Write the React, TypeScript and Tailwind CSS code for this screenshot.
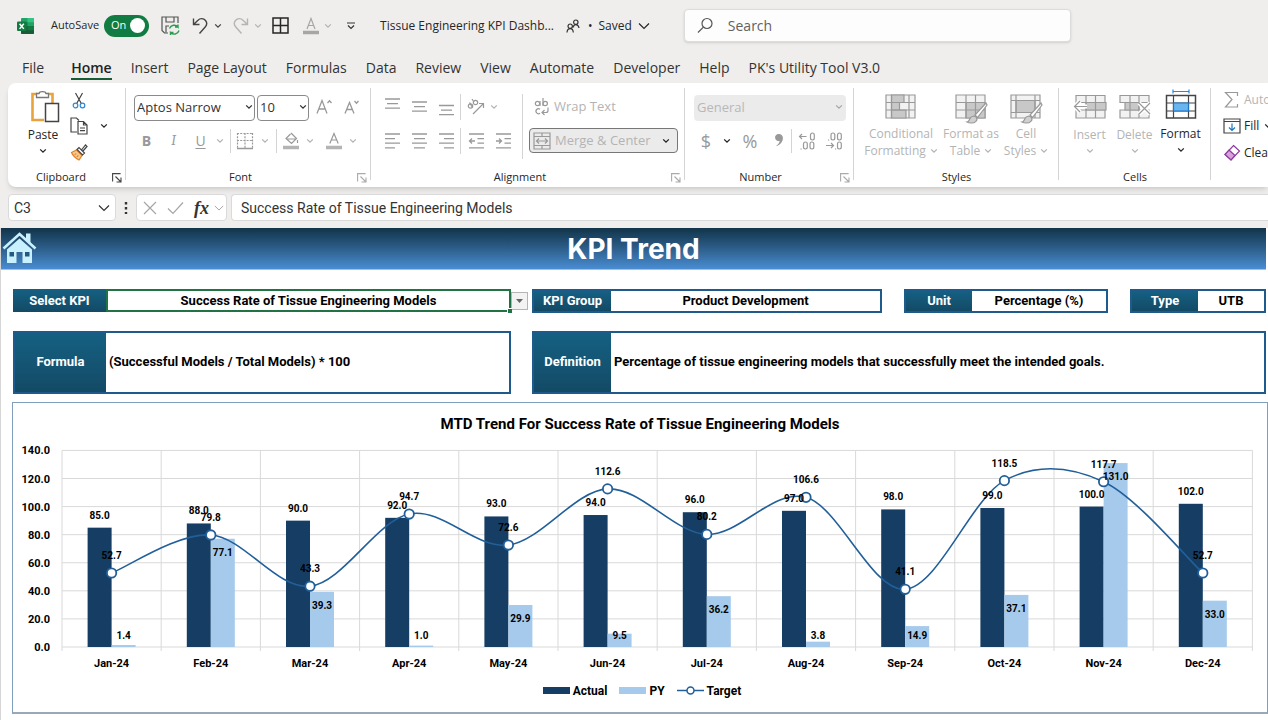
import type { ReactNode } from 'react'

const months = ['Jan', 'Feb', 'Mar', 'Apr', 'May', 'Jun', 'Jul', 'Aug', 'Sep', 'Oct', 'Nov', 'Dec']
const actual = [85, 88, 90, 92, 93, 94, 96, 97, 98, 99, 100, 102]
const previous = [1.4, 77.1, 39.3, 1.0, 29.9, 9.5, 36.2, 3.8, 14.9, 37.1, 131, 33]
const target = [52.7, 79.8, 43.3, 94.7, 72.6, 112.6, 80.2, 106.6, 41.1, 118.5, 117.7, 52.7]

const tabs = [
  'Home',
  'Insert',
  'Page Layout',
  'Formulas',
  'Data',
  'Review',
  'View',
  'Automate',
  'Developer',
  'Help',
  "PK's Utility Tool V3.0",
]

/* ---------- small building blocks ---------- */

function Icon({ w = 18, h = 18, className = '', children }: { w?: number; h?: number; className?: string; children: ReactNode }) {
  return (
    <svg
      width={w}
      height={h}
      viewBox={`0 0 ${w} ${h}`}
      fill="none"
      stroke="currentColor"
      strokeWidth="1.2"
      className={`shrink-0 ${className}`}
      aria-hidden="true"
    >
      {children}
    </svg>
  )
}

function Chevron({ className = '' }: { className?: string }) {
  return (
    <Icon w={8} h={6} className={className}>
      <path d="M1.2 1.4 4 4.2l2.8-2.8" strokeWidth="1.3" />
    </Icon>
  )
}

function WideChevron({ className = '' }: { className?: string }) {
  return (
    <Icon w={12} h={8} className={className}>
      <path d="M1 1.5 6 6.5l5-5" />
    </Icon>
  )
}

function Tool({ label, className = '', children }: { label: string; className?: string; children: ReactNode }) {
  return (
    <button type="button" aria-label={label} className={`flex h-6 shrink-0 items-center justify-center ${className}`}>
      {children}
    </button>
  )
}

function Divider({ className = 'h-6' }: { className?: string }) {
  return <span className={`w-px shrink-0 bg-[#d4d4d4] ${className}`} />
}

function Group({ name, launcher, className, children }: { name: string; launcher?: string; className: string; children: ReactNode }) {
  return (
    <section className={`relative flex shrink-0 flex-col ${className}`}>
      <div className="h-[86px] pt-[11px]">{children}</div>
      <h2 className="text-center text-[11px] leading-4 text-[#262626]">{name}</h2>
      {launcher && (
        <button type="button" aria-label={`${name} settings`} className={`absolute right-1 bottom-[2px] ${launcher}`}>
          <Icon w={10} h={10}>
            <path d="M.6 8.500V.6h8M3.500 3.500l5 5M9 4.500V9H4.500" strokeWidth="1.100" />
          </Icon>
        </button>
      )}
      <span className="absolute top-[5px] right-0 bottom-[5px] w-px bg-[#d4d4d4]" />
    </section>
  )
}

function Lines({ rows, y = 1 }: { rows: [number, number][]; y?: number }) {
  return (
    <Icon w={16} h={18}>
      {rows.map(([x1, x2], i) => (
        <path key={i} d={`M${x1} ${y + i * 4.6}H${x2}`} strokeWidth="1.3" />
      ))}
    </Icon>
  )
}

/* ---------- title bar ---------- */

function TitleBar() {
  return (
    <header className="flex h-[50px] items-center pt-px pl-4 text-xs text-[#262626]">
      <svg width="18" height="18" viewBox="0 0 18 18" className="shrink-0" aria-hidden="true">
        <rect x="5" y="1" width="13" height="16" rx="1" fill="#21a366" />
        <path d="M11.500 1H17a1 1 0 0 1 1 1v3.200h-6.500z" fill="#33c481" />
        <path d="M5 5.200h6.500v4H5z" fill="#107c41" />
        <path d="M5 9.200h13V16a1 1 0 0 1-1 1H6a1 1 0 0 1-1-1z" fill="#185c37" />
        <path d="M11.500 9.200H18v4h-6.500z" fill="#107c41" />
        <rect x="1" y="4.500" width="9.500" height="9.500" rx="1" fill="#107c41" />
        <path d="m3.600 6.700 4.200 5.200m0-5.200-4.200 5.200" stroke="#fff" strokeWidth="1.500" />
      </svg>
      <span className="ml-[17px] text-[11px]" id="autosave">AutoSave</span>
      <button
        type="button"
        role="switch"
        aria-checked="true"
        aria-labelledby="autosave"
        className="ml-[5px] flex h-[22px] w-[45px] shrink-0 items-center justify-between rounded-full bg-[#107c41] pr-1 pl-[7px] text-[11px] text-white"
      >
        On
        <span className="size-[15px] rounded-full bg-white" />
      </button>
      <Tool label="Save" className="ml-3">
        <Icon w={19} h={20} className="text-[#555]">
          <path d="M7 17H3.500L1 14.500V1h16v6" />
          <path d="M5 1v5h8V1M5 16.500V10h3" />
          <path d="M8.500 12.500a5 5 0 0 1 8.500-1.500V8.500M17 11h-3M18 14.500a5 5 0 0 1-8.500 2V19M9.500 16.500h3" stroke="#2a9d52" strokeWidth="1.400" />
        </Icon>
      </Tool>
      <Tool label="Undo" className="ml-3">
        <Icon w={17} h={18} className="text-[#444]">
          <path d="M1.500 1.500v6h6M1.800 7.200 6 3.200a5 5 0 0 1 7.500.3c1.600 2 1.500 4.500-.3 6.500L7.500 16.500" strokeWidth="1.400" />
        </Icon>
      </Tool>
      <Chevron className="ml-[5px] text-[#444]" />
      <Tool label="Redo" className="ml-[10px]">
        <Icon w={17} h={18} className="text-[#b4b4b4]">
          <path d="M15.500 1.500v6h-6M15.200 7.200 11 3.200a5 5 0 0 0-7.500.3c-1.600 2-1.500 4.500.3 6.500l5.700 6.500" strokeWidth="1.400" />
        </Icon>
      </Tool>
      <Chevron className="ml-[5px] text-[#b4b4b4]" />
      <Tool label="Borders" className="ml-[10px]">
        <Icon w={17} h={17} className="text-[#262626]">
          <path d="M1 1h15v15H1zM8.500 1v15M1 8.500h15" strokeWidth="1.500" />
        </Icon>
      </Tool>
      <Tool label="Font color" className="ml-[13px]">
        <Icon w={18} h={18} className="text-[#a6a6a6]">
          <path d="m5 12 4-10.500L13 12M6.300 8.500h5.400" />
          <path d="M1 15.500h16" strokeWidth="3.500" />
        </Icon>
      </Tool>
      <Chevron className="ml-1 text-[#b4b4b4]" />
      <Tool label="Customize toolbar" className="ml-[14px]">
        <Icon w={10} h={8} className="text-[#333]">
          <path d="M1 1h8M2 3.500l3 3 3-3" />
        </Icon>
      </Tool>
      <h1 className="ml-6 whitespace-nowrap">Tissue Engineering KPI Dashb...</h1>
      <Icon w={14} h={14} className="ml-3 text-[#333]">
        <circle cx="9.800" cy="3.200" r="2.200" />
        <path d="M7.200 8.500c.4-2 1.400-2.800 2.600-2.800s2.800.8 3.200 3.300" />
        <circle cx="4.200" cy="7.200" r="2.200" />
        <path d="M1 13.500c.2-2.500 1.600-3.800 3.200-3.800s2.900 1.300 3.100 3.800" />
      </Icon>
      <button type="button" className="ml-2 flex items-center gap-[6px] whitespace-nowrap">
        <span>•</span>
        <span>Saved</span>
        <WideChevron />
      </button>
      <label className="ml-[34px] flex h-[33px] w-[387px] items-center gap-[14px] rounded border border-[#dcdcdc] bg-[#fdfdfd] px-3 shadow-sm">
        <Icon w={17} h={17} className="text-[#555]">
          <circle cx="10" cy="6.500" r="5" />
          <path d="M6.400 10.100 1 15.500" />
        </Icon>
        <input type="search" aria-label="Search" placeholder="Search" className="min-w-0 flex-1 text-sm outline-none placeholder:text-[#616161]" />
      </label>
    </header>
  )
}

function Tabs() {
  return (
    <nav className="flex h-[33px] items-start gap-[19px] overflow-hidden pt-2 pl-[22px] text-sm leading-5 whitespace-nowrap text-[#333]">
      <a href="#file" className="mr-2">File</a>
      {tabs.map((tab) => (
        <a
          key={tab}
          href={`#${tab}`}
          className={tab === 'Home' ? 'border-b-2 border-[#185c37] font-semibold text-[#222]' : ''}
        >
          {tab}
        </a>
      ))}
    </nav>
  )
}

/* ---------- ribbon ---------- */

function Clipboard() {
  return (
    <Group name="Clipboard" launcher="text-[#444]" className="w-[118px] pr-3">
      <div className="-mt-1 flex pl-[17px] text-[#262626]">
        <button type="button" className="flex w-9 flex-col items-center text-xs leading-4">
          <svg width="30" height="33" viewBox="0 0 30 33" fill="none" className="ml-1" aria-hidden="true">
            <path d="M7 4H2.500v26H14M18 4h4.500v9" stroke="#e8a33d" strokeWidth="2.600" />
            <path d="M6.500 7.500v-4H9C9.500 1 15.500 1 16 3.500h2.500v4z" fill="#fff" stroke="#777" strokeWidth="1.300" />
            <path d="M15.500 13.500h13v18h-13z" fill="#fff" stroke="#444" strokeWidth="1.500" />
          </svg>
          <span className="mt-1">Paste</span>
          <Chevron className="mt-[5px]" />
        </button>
        <div className="ml-[9px] flex flex-col gap-[3px]">
          <Tool label="Cut" className="h-[22px] w-[18px]">
            <Icon w={14} h={18} className="text-[#444]">
              <path d="m3.500 1 5.800 10.500M10.500 1 4.700 11.500" />
              <circle cx="3.500" cy="13.500" r="2.300" stroke="#2b88d8" />
              <circle cx="10.500" cy="13.500" r="2.300" stroke="#2b88d8" />
            </Icon>
          </Tool>
          <Tool label="Copy" className="h-[22px] w-[18px]">
            <Icon w={18} h={18} className="text-[#444]">
              <path d="M7 15H1V1h5.500L9 3.500" />
              <path d="M8 4.500h5.500L17 8v9H8zM13.500 4.500V8H17M10 11h5M10 13.700h5" />
            </Icon>
          </Tool>
          <Tool label="Format painter" className="w-[18px]">
            <Icon w={18} h={18} className="text-[#444]">
              <path d="m1.500 9.500 5-2.500 5.500 5.500-3 4.500C6 15.500 3 13 1.500 9.500z" fill="#f7c98b" stroke="#e0802c" />
              <path d="m4.500 11.500 1.800-.8M6.800 13.800l1.500-1.500" stroke="#e0802c" />
              <path d="m7 6.500 2-2 5.500 5.500-2 2zM11.500 7l4-5 1.500 1.500-4 4.500" fill="#fff" />
            </Icon>
          </Tool>
        </div>
        <Chevron className="mt-[33px] ml-3" />
      </div>
    </Group>
  )
}

function FontGroup() {
  return (
    <Group name="Font" launcher="text-[#aaa]" className="w-[245px] pr-4">
      <div className="flex items-center gap-[2px] pl-2 text-[#333]">
        <div className="relative">
          <select aria-label="Font family" className="h-[26px] w-[121px] appearance-none rounded border border-[#8a8a8a] bg-white pl-[2px] text-[13px]">
            <option>Aptos Narrow</option>
          </select>
          <Chevron className="pointer-events-none absolute top-[10px] right-[2px]" />
        </div>
        <div className="relative">
          <select aria-label="Font size" className="h-[26px] w-[52px] appearance-none rounded border border-[#8a8a8a] bg-white pl-[2px] text-[13px]">
            <option>10</option>
          </select>
          <Chevron className="pointer-events-none absolute top-[10px] right-[2px]" />
        </div>
        <Tool label="Increase font size" className="ml-1 w-[18px] text-[#999]">
          <Icon w={17} h={18}>
            <path d="m1 15.500 5-13 5 13M2.800 11h6.400M11.500 5l2-2.200 2 2.200" strokeWidth="1.300" />
          </Icon>
        </Tool>
        <Tool label="Decrease font size" className="ml-2 w-[18px] text-[#999]">
          <Icon w={16} h={18}>
            <path d="m1 15.500 4.500-11 4.500 11M2.700 11.500h5.600M10.500 3l2 2.200 2-2.200" strokeWidth="1.300" />
          </Icon>
        </Tool>
      </div>
      <div className="mt-2 flex items-center pl-[7px] text-sm text-[#999]">
        <Tool label="Bold" className="w-[27px] font-bold">B</Tool>
        <Tool label="Italic" className="w-[27px] font-serif italic">I</Tool>
        <Tool label="Underline" className="w-[27px] underline underline-offset-2">U</Tool>
        <Chevron className="ml-[2px] text-[#b4b4b4]" />
        <Divider className="ml-[6px] h-6" />
        <Tool label="Borders" className="ml-[5px]">
          <Icon w={18} h={18}>
            <path d="M1.500 1v15M16.500 1v15M9 1v15M1 1.500h16M1 8.500h16" strokeDasharray="2 1.200" />
            <path d="M1 16.500h16" strokeWidth="1.600" />
          </Icon>
        </Tool>
        <Chevron className="ml-[7px] text-[#b4b4b4]" />
        <Divider className="ml-[7px] h-6" />
        <Tool label="Fill color" className="ml-[5px]">
          <Icon w={18} h={18}>
            <path d="m9 1 5.500 5.500-5 5L4 6.500 8.500 2M4.500 7h9.500M15.500 8v3" />
            <path d="M1 15.500h16" strokeWidth="3.500" stroke="#b4b4b4" />
          </Icon>
        </Tool>
        <Chevron className="ml-[6px] text-[#b4b4b4]" />
        <Tool label="Font color" className="ml-[11px]">
          <Icon w={18} h={18}>
            <path d="M4.800 11.500 9 1.500l4.200 10M6.200 8h5.600" />
            <path d="M1 15.500h16" strokeWidth="3.500" stroke="#b4b4b4" />
          </Icon>
        </Tool>
        <Chevron className="ml-[6px] text-[#b4b4b4]" />
      </div>
    </Group>
  )
}

function Alignment() {
  return (
    <Group name="Alignment" launcher="text-[#aaa]" className="w-[314px] pr-4">
      <div className="flex text-[#999]">
        <div>
          <div className="flex h-[26px] items-center pl-[7px]">
            <Tool label="Top align" className="w-[27px]"><Lines rows={[[1, 16], [3, 14], [1, 16]]} /></Tool>
            <Tool label="Middle align" className="w-[27px]"><Lines y={4} rows={[[1, 16], [3, 14], [1, 16]]} /></Tool>
            <Tool label="Bottom align" className="w-[27px]"><Lines y={7.5} rows={[[1, 16], [3, 14], [1, 16]]} /></Tool>
            <Divider className="ml-[1px] h-[26px]" />
            <Tool label="Orientation" className="ml-[6px]">
              <Icon w={18} h={18}>
                <circle cx="3.500" cy="8" r="2.200" />
                <circle cx="8.500" cy="4.500" r="2.200" />
                <path d="m2.500 4.500 3 5M5 1l2 3M6 16 16 6M12 5.500h4.500V10" />
              </Icon>
            </Tool>
            <Chevron className="ml-[5px] text-[#b4b4b4]" />
          </div>
          <div className="mt-2 flex h-[26px] items-center pl-[7px]">
            <Tool label="Align left" className="w-[27px]"><Lines rows={[[1, 16], [1, 11], [1, 16], [1, 11]]} y={2} /></Tool>
            <Tool label="Center" className="w-[27px]"><Lines rows={[[1, 16], [3, 14], [1, 16], [3, 14]]} y={2} /></Tool>
            <Tool label="Align right" className="w-[27px]"><Lines rows={[[1, 16], [6, 16], [1, 16], [6, 16]]} y={2} /></Tool>
            <Divider className="ml-[1px] h-[26px]" />
            <Tool label="Decrease indent" className="ml-[1px] w-[27px]">
              <Icon w={16} h={18}>
                <path d="M1 2h15M9.500 6.600H16M9.500 11.200H16M1 15.800h15M7 9H1.500M4 6.500 1.500 9 4 11.500" strokeWidth="1.300" />
              </Icon>
            </Tool>
            <Tool label="Increase indent" className="w-[27px]">
              <Icon w={16} h={18}>
                <path d="M1 2h15M9.500 6.600H16M9.500 11.200H16M1 15.800h15M1 9h5.500M4 6.500 6.500 9 4 11.500" strokeWidth="1.300" />
              </Icon>
            </Tool>
          </div>
        </div>
        <Divider className="mx-[6px] h-[65px]" />
        <div className="text-[13px] whitespace-nowrap text-[#b4b4b4]">
          <button type="button" className="flex h-[26px] items-center gap-1 pl-[5px]">
            <Icon w={16} h={18} className="text-[#999]">
              <circle cx="3.500" cy="5.500" r="2.200" />
              <path d="M6 3v5M9 0v8" />
              <circle cx="11.200" cy="5.500" r="2.200" />
              <path d="M6 11.200a2.500 2.500 0 1 0 0 4M14 9.500v3a2 2 0 0 1-2 2H8.500M10.500 12 8 14.500l2.500 2.500" />
            </Icon>
            Wrap Text
          </button>
          <button type="button" className="mt-2 flex h-[25px] w-[149px] items-center gap-1 rounded border border-[#777] bg-[#ebebeb] px-[3px]">
            <Icon w={18} h={18} className="text-[#999]">
              <path d="M1 1h16v16H1zM1 4.500h16M1 13.500h16M9 1v3.500M9 13.500V17M3.500 9h11M6 6.500 3.500 9 6 11.500M12 6.500 14.500 9 12 11.500" />
            </Icon>
            Merge &amp; Center
            <Chevron className="mr-1 ml-auto text-[#222]" />
          </button>
        </div>
      </div>
    </Group>
  )
}

function NumberGroup() {
  return (
    <Group name="Number" launcher="text-[#aaa]" className="w-[169px] pr-[18px]">
      <div className="relative w-[161px] pl-[9px]">
        <select aria-label="Number format" className="h-[26px] w-full appearance-none rounded bg-[#ebebeb] pl-[3px] text-[13px] text-[#b8b8b8]">
          <option>General</option>
        </select>
        <Chevron className="pointer-events-none absolute top-[10px] right-[3px] text-[#a8a8a8]" />
      </div>
      <div className="mt-2 flex items-center pl-[11px] text-lg text-[#999]">
        <Tool label="Currency" className="w-5">$</Tool>
        <Chevron className="ml-[7px] text-[#222]" />
        <Tool label="Percent" className="ml-2 w-[22px]">%</Tool>
        <Tool label="Comma style" className="ml-[9px] w-[18px]">
          <Icon w={10} h={15}>
            <path
              d="M4.600 1a3.500 3.500 0 1 0 1.100 6.800C5.400 10 4 11.900 1.800 13.300 6.500 12 8.900 8.600 8.900 5 8.900 2.600 7 1 4.600 1z"
              fill="currentColor"
              stroke="none"
            />
          </Icon>
        </Tool>
        <Divider className="ml-[3px] h-6" />
        <Tool label="Increase decimal" className="ml-[6px]">
          <Icon w={18} h={18}>
            <path d="M8.500 4.500H1.500M4 2 1.500 4.500 4 7" />
            <rect x="12.500" y="1" width="3.800" height="7" rx="1.900" />
            <rect x="5.500" y="10" width="3.800" height="7" rx="1.900" />
            <rect x="12" y="10" width="3.800" height="7" rx="1.900" />
            <path d="M2.500 17h1.200" />
          </Icon>
        </Tool>
        <Tool label="Decrease decimal" className="ml-[9px]">
          <Icon w={18} h={18}>
            <path d="M1 13.500h7.500M6 11l2.500 2.500L6 16" />
            <rect x="6" y="1" width="3.800" height="7" rx="1.900" />
            <rect x="12.500" y="1" width="3.800" height="7" rx="1.900" />
            <rect x="12.500" y="10" width="3.800" height="7" rx="1.900" />
            <path d="M3 8h1.200M10 17h1.200" />
          </Icon>
        </Tool>
      </div>
    </Group>
  )
}

function Brush() {
  return (
    <>
      <path d="M32 9 21 21l2.500 2.500L33 11z" fill="#fff" />
      <path d="M13 28c2 0 2-1.500 3-3.500 1.500-2.800 5-3 6.500-.8 1.600 2.600-1.500 5.300-5 5.300-2 0-3.500-.3-4.500-1z" fill="#d0d0d0" />
    </>
  )
}

function BigButton({ lines, className, icon }: { lines: string[]; className: string; icon: ReactNode }) {
  return (
    <button type="button" className={`flex flex-col items-center text-xs whitespace-nowrap ${className}`}>
      {icon}
      {lines.length === 2 ? (
        <>
          <span className="leading-4">{lines[0]}</span>
          <span className="mt-[1px] flex items-center gap-1 leading-4">
            {lines[1]}
            <Chevron />
          </span>
        </>
      ) : (
        <>
          <span className="leading-4">{lines[0]}</span>
          <Chevron className="mt-[5px]" />
        </>
      )}
    </button>
  )
}

function StylesGroup() {
  return (
    <Group name="Styles" className="w-[205px]">
      <div className="flex pl-[6px] text-[#b4b4b4]">
        <BigButton
          lines={['Conditional', 'Formatting']}
          className="w-[82px]"
          icon={
            <Icon w={34} h={32} className="text-[#999]">
              <path d="M2 1h29v23H2z" fill="#f2f2f2" />
              <path d="M7.500 1H20v7.500H7.500zM7.500 8.500h8v7.500h-8zM7.500 16H22v8H7.500z" fill="#c8c8c8" />
              <path d="M2 8.500h29M2 16h29M7.500 1v23M25 1v23" />
            </Icon>
          }
        />
        <BigButton
          lines={['Format as', 'Table']}
          className="w-[58px]"
          icon={
            <Icon w={34} h={32} className="text-[#999]">
              <path d="M2 1h29v23H2z" fill="#f2f2f2" />
              <path d="M12 8.500h19V24H12z" fill="#c8c8c8" />
              <path d="M2 8.500h29M2 16h29M12 1v23M21.500 1v23" />
              <Brush />
            </Icon>
          }
        />
        <BigButton
          lines={['Cell', 'Styles']}
          className="w-[52px]"
          icon={
            <Icon w={34} h={32} className="text-[#999]">
              <path d="M2 1h29v23H2z" fill="#f2f2f2" />
              <path d="M7 6.500h19v12H7z" fill="#c8c8c8" />
              <path d="M2 6.500h29M2 18.500h29M7 1v23M26 1v23" />
              <Brush />
            </Icon>
          }
        />
      </div>
    </Group>
  )
}

function Cells() {
  return (
    <Group name="Cells" className="w-[152px]">
      <div className="-mt-[5px] flex pl-2 text-[#b4b4b4]">
        <BigButton
          lines={['Insert']}
          className="w-[45px]"
          icon={
            <Icon w={34} h={38} className="text-[#999]">
              <path d="M3 6.500h29v7H3zM3 21h29v8H3z" fill="#f2f2f2" />
              <path d="M13 13.500h20V21H13z" fill="#c8c8c8" />
              <path d="M13 6.500v22.500M22.500 6.500v22.500" />
              <path d="M14 17.500H1.500M7 12l-5.500 5.500L7 23" stroke="#fff" strokeWidth="4" />
              <path d="M14 17.500H1.500M7 12l-5.500 5.500L7 23" />
            </Icon>
          }
        />
        <BigButton
          lines={['Delete']}
          className="w-[45px]"
          icon={
            <Icon w={34} h={38} className="text-[#999]">
              <path d="M2 6.500h29v7H2zM2 21h29v8H2z" fill="#f2f2f2" />
              <path d="M7 13.500h14V21H7z" fill="#c8c8c8" />
              <path d="M12 6.500v22.500M21 6.500v22.500" />
              <path d="m21 14 11 11M32 14 21 25" stroke="#fff" strokeWidth="4" />
              <path d="m21 14 11 11M32 14 21 25" />
            </Icon>
          }
        />
        <BigButton
          lines={['Format']}
          className="w-[47px] text-[#262626]"
          icon={
            <Icon w={34} h={37} className="text-[#444]">
              <path d="M2.500 6.500h29v22.500h-29z" strokeWidth="1.500" />
              <path d="M9.500 6.500v22.500M24.500 6.500v22.500M2.500 14h29M2.500 22h29" />
              <path d="M9.500 14h15v8h-15z" fill="#69b5f0" stroke="#1b74c4" />
              <path d="M9 2.500h16M9 .5v4M25 .5v4" stroke="#2b88d8" />
            </Icon>
          }
        />
      </div>
    </Group>
  )
}

function Editing() {
  return (
    <section aria-label="Editing" className="min-w-0 flex-1 overflow-hidden pt-1 pl-3 text-xs whitespace-nowrap text-[#262626]">
      <button type="button" className="flex h-[26px] items-center gap-[3px] text-[#b4b4b4]">
        <Icon w={18} h={18} className="text-[#999]">
          <path d="M14.500 5V1.500H2.500L9 8.500l-6.500 7.500h12V13" />
        </Icon>
        AutoSum
      </button>
      <button type="button" className="flex h-[26px] items-center gap-[3px]">
        <Icon w={18} h={18} className="text-[#444]">
          <path d="M1 2h16v14H1zM1 4.500h16" />
          <path d="M9 6.500v7M6 10.500l3 3 3-3" stroke="#1b74c4" />
        </Icon>
        Fill
        <Chevron className="ml-[2px]" />
      </button>
      <button type="button" className="flex h-[28px] items-center gap-[3px]">
        <Icon w={18} h={18} className="text-[#8e3a9e]">
          <path d="M10.500 1.500 16.500 7 8 16 2 10.500z" fill="#fff" />
          <path d="m6 6 6 5.500L8 16l-6-5.500z" fill="#d9a0dd" />
        </Icon>
        Clear
      </button>
    </section>
  )
}

function FormulaBar() {
  return (
    <div className="flex items-center py-[7px] pl-2 text-[#333]">
      <div className="flex h-[27px] w-[108px] items-center rounded border border-[#dadada] bg-white pr-[5px]">
        <input aria-label="Name box" defaultValue="C3" className="w-0 flex-1 pl-[5px] font-['Roboto',sans-serif] text-sm outline-none" />
        <WideChevron />
      </div>
      <Icon w={4} h={14} className="mx-2">
        <path d="M2 1v12" strokeWidth="2.400" strokeDasharray="2.400 2.600" />
      </Icon>
      <div className="flex h-[27px] w-[91px] items-center rounded border border-[#dadada] bg-white pr-[2px] pl-[6px] text-[#a6a6a6]">
        <Tool label="Cancel">
          <Icon w={14} h={14}>
            <path d="m1 1 12 12M13 1 1 13" />
          </Icon>
        </Tool>
        <Tool label="Enter" className="ml-[10px]">
          <Icon w={17} h={14}>
            <path d="m1 7.500 5 5L16 1.500" />
          </Icon>
        </Tool>
        <Tool label="Insert function" className="ml-[10px] font-['Liberation_Serif'] text-lg font-bold text-[#333] italic">fx</Tool>
        <WideChevron className="ml-auto w-[10px]" />
      </div>
      <input
        aria-label="Formula"
        defaultValue="Success Rate of Tissue Engineering Models"
        className="ml-1 h-[27px] flex-1 rounded-l border border-r-0 border-[#dadada] bg-white pl-[9px] font-['Roboto',sans-serif] text-sm outline-none"
      />
    </div>
  )
}

/* ---------- worksheet ---------- */

function Field({ name, className = '', labelClass, children }: { name: string; className?: string; labelClass: string; children: ReactNode }) {
  return (
    <div className={`flex border-2 border-[#1f5a8c] ${className}`}>
      <span className={`flex shrink-0 items-center justify-center bg-linear-to-b from-[#156082] to-[#134a66] text-white ${labelClass}`}>{name}</span>
      <div className="flex min-w-0 flex-1 items-center">{children}</div>
    </div>
  )
}

function Details() {
  return (
    <div className="grid grid-cols-[498fr_734fr] gap-x-[21px] gap-y-[18px] pt-[19px] pr-[2px] pl-3 text-[13px] font-bold text-black">
      <div className="relative flex h-[23px]">
        <label htmlFor="kpi" className="flex w-[93px] shrink-0 items-center justify-center bg-linear-to-b from-[#156082] to-[#134a66] text-white">
          Select KPI
        </label>
        <select id="kpi" className="min-w-0 flex-1 appearance-none border-2 border-[#217346] bg-white text-center [text-align-last:center]">
          <option>Success Rate of Tissue Engineering Models</option>
        </select>
        <span className="pointer-events-none absolute -right-[17px] bottom-[2px] flex h-[18px] w-[17px] items-center justify-center border border-[#b5b5b5] bg-[#f3f3f3]">
          <svg width="7" height="4" viewBox="0 0 7 4" aria-hidden="true">
            <path d="M0 0h7L3.500 4z" fill="#666" />
          </svg>
        </span>
        <span className="absolute -right-px -bottom-px size-[5px] border-t border-l border-white bg-[#217346]" />
      </div>
      <div className="grid grid-cols-[350fr_204fr_136fr] gap-x-[22px]">
        <Field name="KPI Group" labelClass="w-[77px]">
          <span className="flex-1 text-center">Product Development</span>
        </Field>
        <Field name="Unit" labelClass="w-[66px]">
          <span className="flex-1 text-center">Percentage (%)</span>
        </Field>
        <Field name="Type" labelClass="w-[66px]">
          <span className="flex-1 text-center">UTB</span>
        </Field>
      </div>
      <Field name="Formula" className="h-[63px]" labelClass="w-[91px]">
        <span className="pl-[3px]">(Successful Models / Total Models) * 100</span>
      </Field>
      <Field name="Definition" className="h-[63px]" labelClass="w-[77px]">
        <span className="pl-[3px]">Percentage of tissue engineering models that successfully meet the intended goals.</span>
      </Field>
    </div>
  )
}

const LEFT = 49
const STEP = 99.2
const BASE = 207
const scale = (v: number) => BASE - v * 1.404
const center = (i: number) => LEFT + STEP * (i + 0.5)

// Catmull-Rom spline through the points, written as cubic beziers
function smooth(points: [number, number][]) {
  let d = `M${points[0][0]} ${points[0][1]}`
  for (let i = 0; i < points.length - 1; i++) {
    const a = points[i - 1] ?? points[i]
    const b = points[i]
    const c = points[i + 1]
    const e = points[i + 2] ?? c
    d += `C${b[0] + (c[0] - a[0]) / 6} ${b[1] + (c[1] - a[1]) / 6} ${c[0] - (e[0] - b[0]) / 6} ${c[1] - (e[1] - b[1]) / 6} ${c[0]} ${c[1]}`
  }
  return d
}

function Chart() {
  const line = target.map((v, i): [number, number] => [center(i), scale(v)])
  return (
    <section className="mt-2 ml-[11px] border border-b-2 border-[#7f9fbc] border-b-[#9aa9b8] pt-[11px] pb-[13px] font-bold text-black">
      <h2 className="text-center text-[15px] leading-5">MTD Trend For Success Rate of Tissue Engineering Models</h2>
      <svg viewBox="0 0 1254 242" className="mt-[6px] block h-auto w-full" role="img" aria-label="MTD trend chart">
        {[0, 20, 40, 60, 80, 100, 120, 140].map((v) => (
          <g key={v}>
            <path d={`M${LEFT} ${scale(v)}H${LEFT + STEP * 12}`} stroke="#d9d9d9" />
            <text x="37" y={scale(v) + 4} textAnchor="end" className="text-[11px]">{v.toFixed(1)}</text>
          </g>
        ))}
        {Array.from({ length: 13 }, (_, i) => (
          <path key={i} d={`M${LEFT + STEP * i} ${scale(140)}V${BASE + 4}`} stroke="#d9d9d9" />
        ))}
        {months.map((m, i) => (
          <g key={m}>
            <rect x={center(i) - 24} y={scale(actual[i])} width="24" height={BASE - scale(actual[i])} fill="#163e64" />
            <rect x={center(i)} y={scale(previous[i])} width="24" height={BASE - scale(previous[i])} fill="#a6caec" />
            <text x={center(i)} y="227" textAnchor="middle" className="text-[11px]">{m}-24</text>
          </g>
        ))}
        <path d={smooth(line)} fill="none" stroke="#215f9a" strokeWidth="1.6" />
        {line.map(([x, y], i) => (
          <circle key={i} cx={x} cy={y} r="4.700" fill="#fff" stroke="#215f9a" strokeWidth="1.800" />
        ))}
        {months.map((m, i) => (
          <g key={m} textAnchor="middle" className="text-[10px]">
            <text x={center(i) - 12} y={scale(actual[i]) - 9}>{actual[i].toFixed(1)}</text>
            <text x={center(i) + 12} y={Math.min(scale(previous[i]) + 17, 199)}>{previous[i].toFixed(1)}</text>
            <text x={center(i)} y={scale(target[i]) - 14}>{target[i].toFixed(1)}</text>
          </g>
        ))}
      </svg>
      <ul className="mt-px flex justify-center gap-3 pl-1 text-xs leading-4">
        <li className="flex items-center gap-[3px]"><span className="h-[7px] w-[27px] bg-[#163e64]" />Actual</li>
        <li className="flex items-center gap-[3px]"><span className="h-[7px] w-[27px] bg-[#a6caec]" />PY</li>
        <li className="flex items-center gap-[3px]">
          <svg width="27" height="9" viewBox="0 0 27 9" aria-hidden="true">
            <path d="M0 4.500h27" stroke="#215f9a" strokeWidth="1.500" />
            <circle cx="13.500" cy="4.500" r="3.500" fill="#fff" stroke="#215f9a" strokeWidth="1.500" />
          </svg>
          Target
        </li>
      </ul>
    </section>
  )
}

export default function App() {
  return (
    <div className="min-h-screen overflow-hidden bg-[#efeeed] font-['Open_Sans',sans-serif]">
      <TitleBar />
      <Tabs />
      <div className="ml-2 flex overflow-hidden rounded-l-lg bg-white pb-[2px] shadow-md">
        <Clipboard />
        <FontGroup />
        <Alignment />
        <NumberGroup />
        <StylesGroup />
        <Cells />
        <Editing />
      </div>
      <FormulaBar />
      <main className="border-l border-[#d6d6d6] bg-white pb-2 font-['Roboto',sans-serif]">
        <div className="relative mr-[2px] flex h-[42px] items-center justify-center border-b border-[#9cc3ee] bg-linear-to-b from-[#12344a] to-[#4a8dd2]">
          <a href="#home" aria-label="Home" className="absolute top-1 left-[1px]">
            <svg width="35" height="32" viewBox="0 0 35 32" aria-hidden="true">
              <path d="M24 1.500h4.500V12L24 8z" fill="#c9f0ff" />
              <path d="m1.500 16.500 16-14.500 16 14.500" fill="none" stroke="#c9f0ff" strokeWidth="2.600" />
              <path d="M17.500 6.500 30 17.500V31H20.500V20h-6v11H5V17.500z" fill="#c9f0ff" />
              <path d="M7.500 20H12v4.500H7.500zM23 20h4.500v4.500H23z" fill="#23587f" />
            </svg>
          </a>
          <h1 className="font-['Inter',sans-serif] text-[28px] leading-8 font-bold text-white">KPI Trend</h1>
        </div>
        <Details />
        <Chart />
      </main>
    </div>
  )
}
